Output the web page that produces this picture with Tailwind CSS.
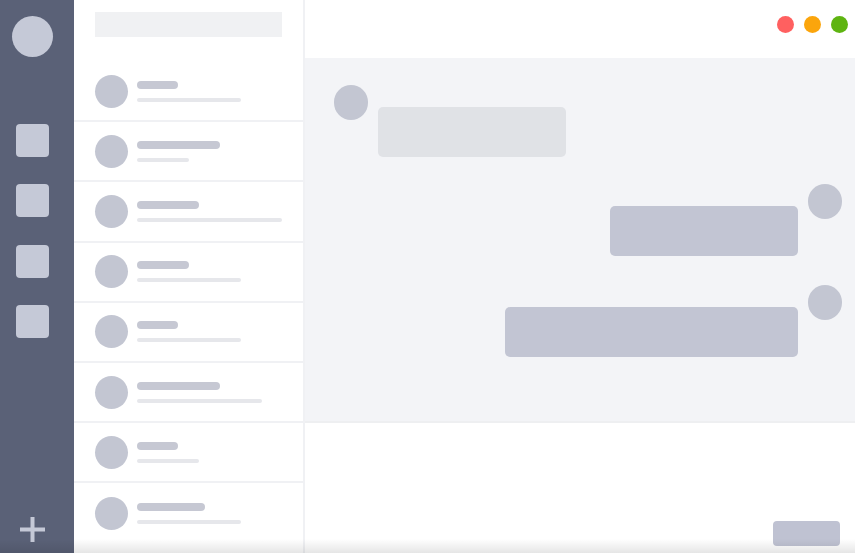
<!DOCTYPE html>
<html lang="en">
<head>
  <meta charset="UTF-8" />
  <meta name="viewport" content="width=device-width, initial-scale=1.0" />
  <title>Chat</title>
  <script src="https://cdn.jsdelivr.net/npm/@tailwindcss/browser@4"></script>
</head>
<body class="bg-white overflow-hidden">
  <div class="relative flex w-[855px] h-[553px] overflow-hidden">
    <!-- icon rail -->
    <aside class="w-[74px] shrink-0 bg-[#5a6177] flex flex-col items-center pt-4 pb-[11px] pr-[9px]">
      <div class="w-[41px] h-[41px] rounded-full bg-[#c5c9d7]"></div>
      <div class="flex flex-col gap-[27.3px] mt-[67px]">
        <div class="w-[33px] h-[33px] rounded-[4px] bg-[#c5c9d7]"></div>
        <div class="w-[33px] h-[33px] rounded-[4px] bg-[#c5c9d7]"></div>
        <div class="w-[33px] h-[33px] rounded-[4px] bg-[#c5c9d7]"></div>
        <div class="w-[33px] h-[33px] rounded-[4px] bg-[#c5c9d7]"></div>
      </div>
      <svg class="mt-auto" width="25" height="25" viewBox="0 0 25 25"><path d="M12.5 0v25M0 12.5h25" stroke="#c5c9d7" stroke-width="4" fill="none"/></svg>
    </aside>

    <!-- conversation list -->
    <section class="w-[231px] shrink-0 border-r-2 border-[#f0f1f4] flex flex-col">
      <div class="h-[62px] shrink-0 pl-[21px] pt-3">
        <div class="w-[187px] h-[25px] bg-[#f0f1f3]"></div>
      </div>

      <div class="h-[60.2px] shrink-0 border-b-2 border-[#f0f1f4] pl-[21px] flex items-center gap-[9px]">
        <div class="w-[33px] h-[33px] rounded-full bg-[#c3c6d2]"></div>
        <div class="flex flex-col gap-[9px]">
          <div class="w-[41px] h-2 rounded-full bg-[#c6c8d3]"></div>
          <div class="w-[104px] h-1 rounded-full bg-[#e6e7eb]"></div>
        </div>
      </div>
      <div class="h-[60.2px] shrink-0 border-b-2 border-[#f0f1f4] pl-[21px] flex items-center gap-[9px]">
        <div class="w-[33px] h-[33px] rounded-full bg-[#c3c6d2]"></div>
        <div class="flex flex-col gap-[9px]">
          <div class="w-[83px] h-2 rounded-full bg-[#c6c8d3]"></div>
          <div class="w-[52px] h-1 rounded-full bg-[#e6e7eb]"></div>
        </div>
      </div>
      <div class="h-[60.2px] shrink-0 border-b-2 border-[#f0f1f4] pl-[21px] flex items-center gap-[9px]">
        <div class="w-[33px] h-[33px] rounded-full bg-[#c3c6d2]"></div>
        <div class="flex flex-col gap-[9px]">
          <div class="w-[62px] h-2 rounded-full bg-[#c6c8d3]"></div>
          <div class="w-[145px] h-1 rounded-full bg-[#e6e7eb]"></div>
        </div>
      </div>
      <div class="h-[60.2px] shrink-0 border-b-2 border-[#f0f1f4] pl-[21px] flex items-center gap-[9px]">
        <div class="w-[33px] h-[33px] rounded-full bg-[#c3c6d2]"></div>
        <div class="flex flex-col gap-[9px]">
          <div class="w-[52px] h-2 rounded-full bg-[#c6c8d3]"></div>
          <div class="w-[104px] h-1 rounded-full bg-[#e6e7eb]"></div>
        </div>
      </div>
      <div class="h-[60.2px] shrink-0 border-b-2 border-[#f0f1f4] pl-[21px] flex items-center gap-[9px]">
        <div class="w-[33px] h-[33px] rounded-full bg-[#c3c6d2]"></div>
        <div class="flex flex-col gap-[9px]">
          <div class="w-[41px] h-2 rounded-full bg-[#c6c8d3]"></div>
          <div class="w-[104px] h-1 rounded-full bg-[#e6e7eb]"></div>
        </div>
      </div>
      <div class="h-[60.2px] shrink-0 border-b-2 border-[#f0f1f4] pl-[21px] flex items-center gap-[9px]">
        <div class="w-[33px] h-[33px] rounded-full bg-[#c3c6d2]"></div>
        <div class="flex flex-col gap-[9px]">
          <div class="w-[83px] h-2 rounded-full bg-[#c6c8d3]"></div>
          <div class="w-[125px] h-1 rounded-full bg-[#e6e7eb]"></div>
        </div>
      </div>
      <div class="h-[60.2px] shrink-0 border-b-2 border-[#f0f1f4] pl-[21px] flex items-center gap-[9px]">
        <div class="w-[33px] h-[33px] rounded-full bg-[#c3c6d2]"></div>
        <div class="flex flex-col gap-[9px]">
          <div class="w-[41px] h-2 rounded-full bg-[#c6c8d3]"></div>
          <div class="w-[62px] h-1 rounded-full bg-[#e6e7eb]"></div>
        </div>
      </div>
      <div class="h-[60.2px] shrink-0 pl-[21px] flex items-center gap-[9px]">
        <div class="w-[33px] h-[33px] rounded-full bg-[#c3c6d2]"></div>
        <div class="flex flex-col gap-[9px]">
          <div class="w-[68px] h-2 rounded-full bg-[#c6c8d3]"></div>
          <div class="w-[104px] h-1 rounded-full bg-[#e6e7eb]"></div>
        </div>
      </div>
    </section>

    <!-- chat -->
    <main class="flex-1 flex flex-col">
      <header class="h-[58px] shrink-0 flex items-start justify-end gap-[10px] pt-4 pr-[7px]">
        <div class="w-[17px] h-[17px] rounded-full bg-[#ff6060]"></div>
        <div class="w-[17px] h-[17px] rounded-full bg-[#fba50c]"></div>
        <div class="w-[17px] h-[17px] rounded-full bg-[#5eb411]"></div>
      </header>

      <div class="h-[365px] shrink-0 bg-[#f3f4f7] border-b-2 border-[#eeeff1] flex flex-col pt-[27px] pl-[29px] pr-[13px]">
        <div class="flex items-start gap-[10px]">
          <div class="w-[34px] h-[35px] rounded-full bg-[#c3c6d2]"></div>
          <div class="w-[188px] h-[50px] mt-[22px] rounded-[5px] bg-[#e0e2e6]"></div>
        </div>
        <div class="flex items-start justify-end gap-[10px] mt-[27px]">
          <div class="w-[188px] h-[50px] mt-[22px] rounded-[5px] bg-[#c2c5d3]"></div>
          <div class="w-[34px] h-[35px] rounded-full bg-[#c3c6d2]"></div>
        </div>
        <div class="flex items-start justify-end gap-[10px] mt-[29px]">
          <div class="w-[293px] h-[50px] mt-[22px] rounded-[5px] bg-[#c2c5d3]"></div>
          <div class="w-[34px] h-[35px] rounded-full bg-[#c3c6d2]"></div>
        </div>
      </div>

      <div class="flex-1 flex items-end justify-end pr-[15px] pb-[7px]">
        <div class="w-[67px] h-[25px] rounded-[4px] bg-[#bfc2d2]"></div>
      </div>
    </main>

    <!-- soft fade along the bottom edge -->
    <div class="absolute left-0 right-0 bottom-0 h-[14px] bg-gradient-to-b from-black/0 to-black/10 pointer-events-none"></div>
  </div>
</body>
</html>
